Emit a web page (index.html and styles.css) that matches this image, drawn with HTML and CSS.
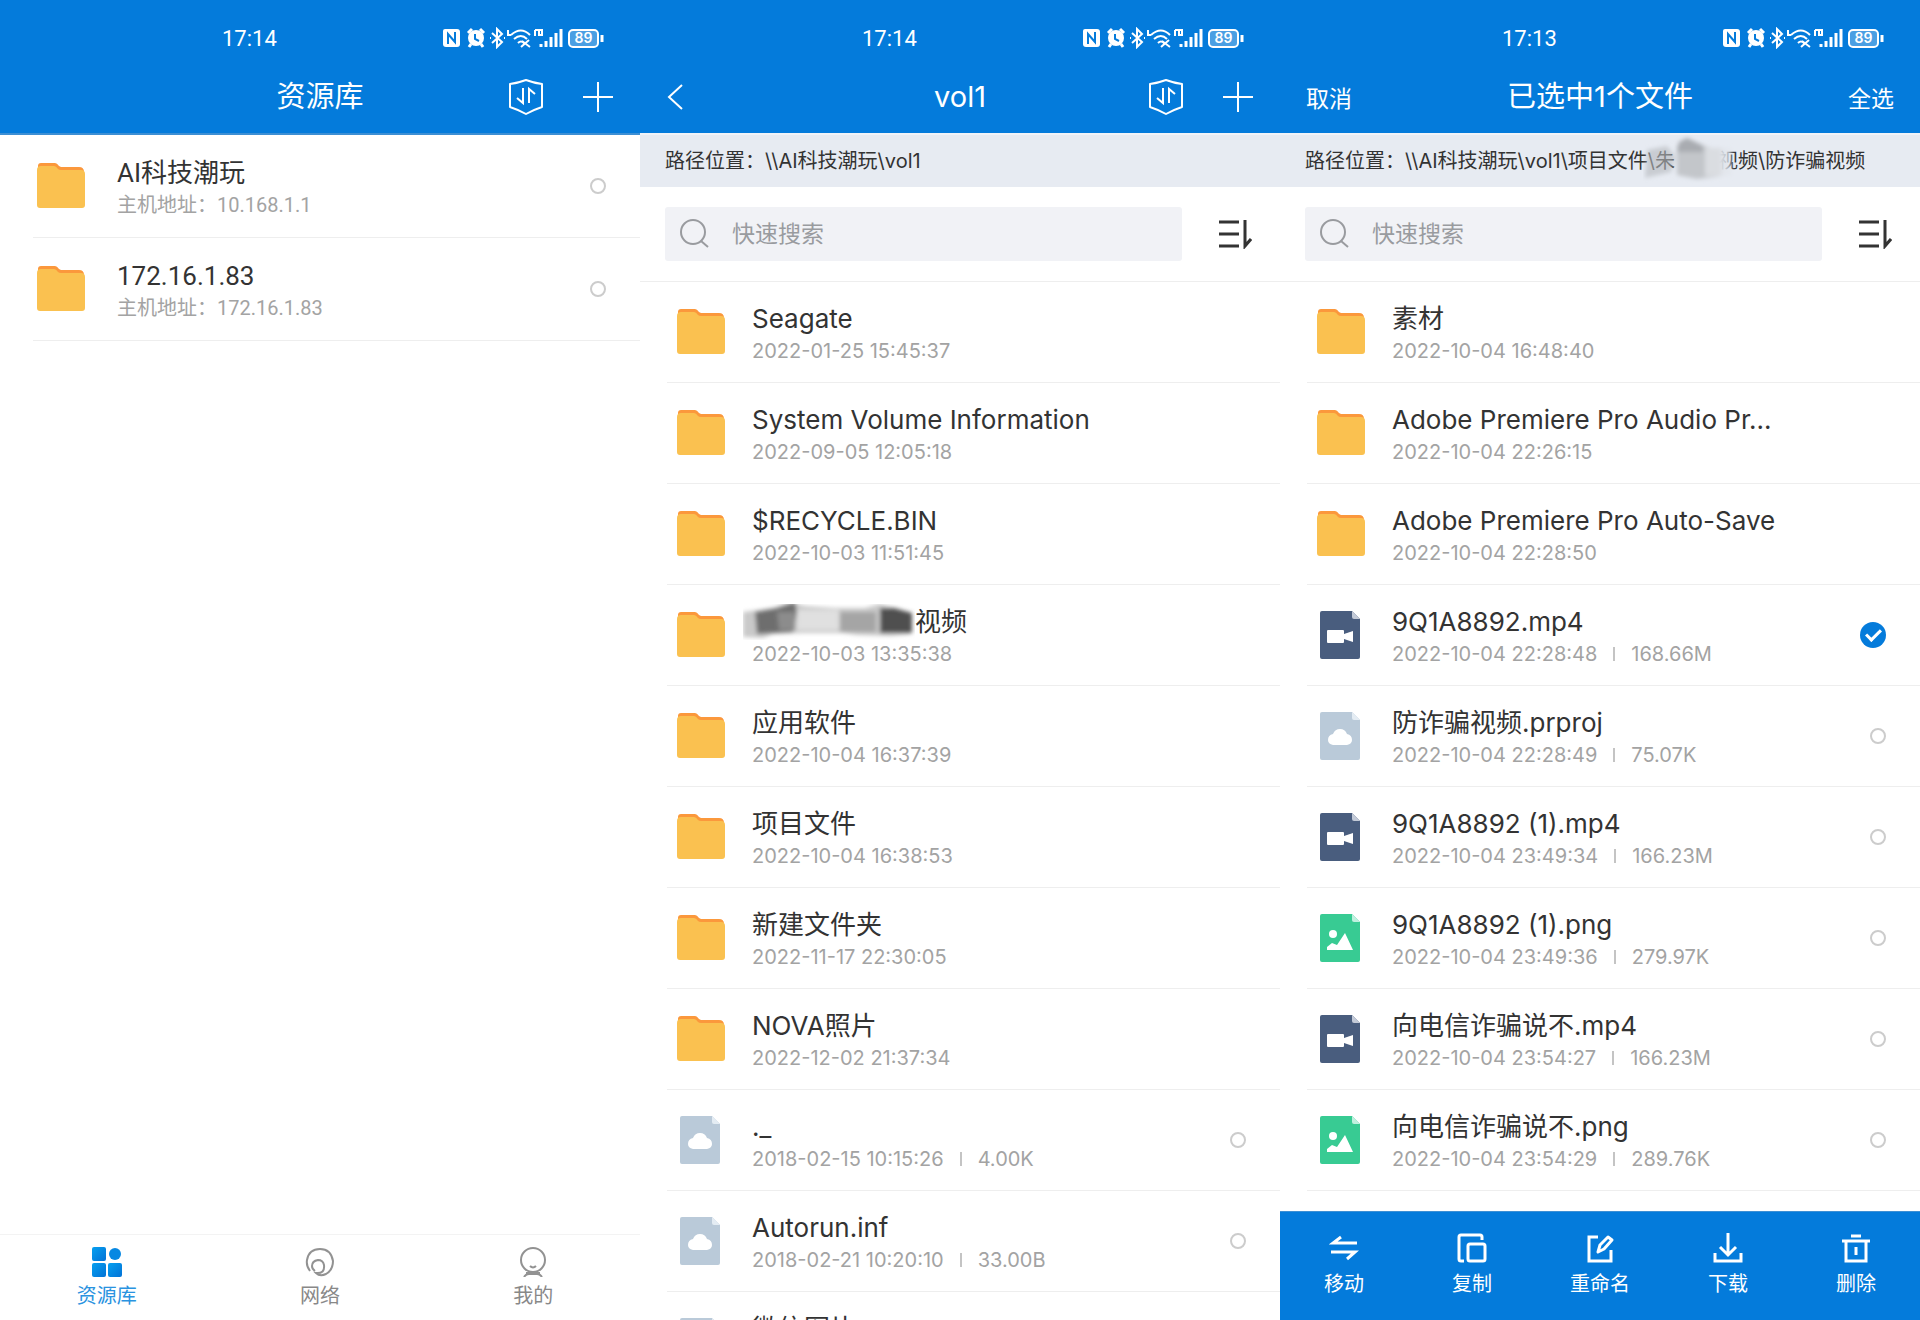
FILE: index.html
```html
<!DOCTYPE html>
<html lang="zh-CN">
<head>
<meta charset="utf-8">
<title>资源库</title>
<link rel="stylesheet" href="styles.css">
</head>
<body>
<svg class="sprite" aria-hidden="true">
  <defs>
    <linearGradient id="tile" x1="0" y1="0" x2="1" y2="1"><stop offset="0" stop-color="#06a0f0"/><stop offset="1" stop-color="#0272d6"/></linearGradient>
    <filter id="soft" x="-10%" y="-20%" width="120%" height="140%"><feGaussianBlur stdDeviation="2"/></filter>
  </defs>
  <symbol id="status" viewBox="0 0 162 22">
    <path d="M3 2h12q3 0 3 3v12q0 3-3 3H4q-3 0-3-3V4q0-2 2-2z" fill="#fff"/>
    <path d="M6 17V7l7 8V5" fill="none" stroke="#047bdb" stroke-width="2"/>
    <circle cx="34" cy="11" r="8" fill="#fff"/>
    <path d="M26 6l4-4M42 6l-4-4M29 17l-2 3M39 17l2 3" stroke="#fff" stroke-width="3"/>
    <path d="M33 7v5l4 2" fill="none" stroke="#047bdb" stroke-width="2"/>
    <path d="M50 6l10 9-5 5V2l5 5-10 9M48 11h1M62 11h1" fill="none" stroke="#fff" stroke-width="2"/>
    <path d="M69 8q10-9 19 0M72 12q7-6 13 0M76 16q3-3 6 0M66 3v5h3M80 14l8 6M87 13l-8 7" fill="none" stroke="#fff" stroke-width="2"/>
    <path d="M93 3v6M93 3h3M97 8V3h3v5z" fill="none" stroke="#fff" stroke-width="2"/>
    <path d="M99 20v-3M104 20v-6M109 20V10M114 20V6M119 20V2" stroke="#fff" stroke-width="3"/>
    <rect x="127" y="3" width="29" height="17" rx="4" fill="#4a9fe3" stroke="#fff" stroke-width="2"/>
    <path d="M160 8v7" stroke="#fff" stroke-width="3"/>
  </symbol>
  <symbol id="shield" viewBox="0 0 36 36">
    <path d="M2 5q8-1 16-4 8 3 16 4v23q-9 3-16 7-7-4-16-7z" fill="none" stroke="#fff" stroke-width="2" stroke-linejoin="round"/>
    <path d="M15 9v15l-6-5M21 24V10l6 5" fill="none" stroke="#fff" stroke-width="2"/>
  </symbol>
  <symbol id="plus" viewBox="0 0 32 32"><path d="M16 1v30M1 16h30" stroke="#fff" stroke-width="2"/></symbol>
  <symbol id="back" viewBox="0 0 18 28"><path d="M16 2L3 14l13 12" fill="none" stroke="#fff" stroke-width="2"/></symbol>
  <symbol id="search" viewBox="0 0 30 30"><circle cx="13" cy="13" r="12" fill="none" stroke="#999b9f" stroke-width="2"/><path d="M21 22l7 6" stroke="#999b9f" stroke-width="2"/></symbol>
  <symbol id="sort" viewBox="0 0 34 30"><path d="M1 3h20M1 15h20M1 27h20" stroke="#333" stroke-width="3"/><path d="M27 1v26l6-7" fill="none" stroke="#333" stroke-width="3"/></symbol>
  <symbol id="folder" viewBox="0 0 48 46">
    <path d="M1 8V4q0-3 3-3h14q2 0 4 3l2 1h18q5 0 5 5z" fill="#fb983c"/>
    <path d="M0 8q0-4 4-4h13q2 0 4 3 1 1 3 1h20q4 0 4 4v31q0 3-3 3H3q-3 0-3-3z" fill="#fac150"/>
  </symbol>
  <symbol id="video" viewBox="0 0 40 48">
    <path d="M2 0h30l8 8v38q0 2-2 2H2q-2 0-2-2V2q0-2 2-2z" fill="#495d7e"/><path d="M32 0l8 8h-6q-2 0-2-2z" fill="#c3cad7"/>
    <path d="M8 19h15q1 0 1 1v3l9-3v11l-9-3v3q0 1-1 1H8q-1 0-1-1V20q0-1 1-1z" fill="#fff"/>
  </symbol>
  <symbol id="cloud" viewBox="0 0 40 48">
    <path d="M2 0h30l8 8v38q0 2-2 2H2q-2 0-2-2V2q0-2 2-2z" fill="#bacad9"/><path d="M32 0l8 8h-6q-2 0-2-2z" fill="#e4ecf3"/>
    <path d="M13 33q-5-1-5-5 0-5 5-6 2-5 7-5t7 5q5 1 5 6 0 4-5 5z" fill="#fff"/>
  </symbol>
  <symbol id="image" viewBox="0 0 40 48">
    <path d="M2 0h30l8 8v38q0 2-2 2H2q-2 0-2-2V2q0-2 2-2z" fill="#38cb93"/><path d="M32 0l8 8h-6q-2 0-2-2z" fill="#c0f0df"/>
    <circle cx="13" cy="20" r="4" fill="#fff"/><path d="M7 36v-3l5-4 5 2 8-12 8 17z" fill="#fff"/>
  </symbol>
  <symbol id="library" viewBox="0 0 30 30"><rect width="14" height="14" rx="2" fill="url(#tile)"/><circle cx="23" cy="7" r="6" fill="#0788e2"/><rect y="16" width="14" height="14" rx="2" fill="url(#tile)"/><rect x="16" y="16" width="14" height="14" rx="2" fill="url(#tile)"/></symbol>
  <symbol id="network" viewBox="0 0 30 30"><path d="M5 24q-4-5-3-11Q4 2 15 2t13 12q0 9-7 13-6 3-10-1 9 1 8-8-1-5-6-5-6 1-6 6 0 3 3 5" fill="none" stroke="#929292" stroke-width="2"/></symbol>
  <symbol id="me" viewBox="0 0 30 30"><ellipse cx="15" cy="13" rx="12" ry="12" fill="none" stroke="#929292" stroke-width="2"/><path d="M12 19q3 3 6 0M6 30q2-3 5-3h8q3 0 5 3M8 26h14" fill="none" stroke="#929292" stroke-width="2"/></symbol>
  <symbol id="move" viewBox="0 0 30 30"><path d="M28 10H4l8-6M2 19h24l-8 7" fill="none" stroke="#fff" stroke-width="3"/></symbol>
  <symbol id="copy" viewBox="0 0 30 30"><path d="M7 28H4q-2 0-2-2V4q0-2 2-2h19q2 0 2 2v3" fill="none" stroke="#fff" stroke-width="3"/><rect x="11" y="11" width="17" height="17" rx="2" fill="none" stroke="#fff" stroke-width="3"/></symbol>
  <symbol id="rename" viewBox="0 0 30 30"><path d="M13 4H4v24h22V17" fill="none" stroke="#fff" stroke-width="3"/><path d="M13 19l2-7 8-8 4 3-8 9z" fill="none" stroke="#fff" stroke-width="3" stroke-linejoin="round"/></symbol>
  <symbol id="download" viewBox="0 0 30 30"><path d="M15 0v21M7 14l8 8 8-8M2 20v8h26v-8" fill="none" stroke="#fff" stroke-width="3"/></symbol>
  <symbol id="delete" viewBox="0 0 30 30"><path d="M1 8h28M10 3h10M5 8v20h20V8M15 14v8" fill="none" stroke="#fff" stroke-width="3"/></symbol>
</svg>

<div class="screens">
  <section class="screen">
    <header class="header header-edge">
      <div class="status"><time class="clock">17:14</time><div class="indicators"><svg class="status-icons"><use href="#status"/></svg><span class="battery-level">89</span></div></div>
      <div class="titlebar">
        <span></span><h1 class="title">资源库</h1>
        <div class="actions"><button class="icon-btn" aria-label="传输"><svg class="i-shield"><use href="#shield"/></svg></button><button class="icon-btn" aria-label="添加"><svg class="i-plus"><use href="#plus"/></svg></button></div>
      </div>
    </header>
    <ul class="list hosts">
      <li class="row"><svg class="folder"><use href="#folder"/></svg><div class="info"><span class="name">AI科技潮玩</span><span class="meta">主机地址：10.168.1.1</span></div><input type="checkbox" class="pick" aria-label="AI科技潮玩"></li>
      <li class="row"><svg class="folder"><use href="#folder"/></svg><div class="info"><span class="name">172.16.1.83</span><span class="meta">主机地址：172.16.1.83</span></div><input type="checkbox" class="pick" aria-label="172.16.1.83"></li>
    </ul>
    <nav class="tabs">
      <a href="#library" class="tab active"><svg class="i-tab"><use href="#library"/></svg>资源库</a>
      <a href="#network" class="tab"><svg class="i-tab"><use href="#network"/></svg>网络</a>
      <a href="#me" class="tab"><svg class="i-tab"><use href="#me"/></svg>我的</a>
    </nav>
  </section>

  <section class="screen">
    <header class="header">
      <div class="status"><time class="clock">17:14</time><div class="indicators"><svg class="status-icons"><use href="#status"/></svg><span class="battery-level">89</span></div></div>
      <div class="titlebar">
        <button class="icon-btn" aria-label="返回"><svg class="i-back"><use href="#back"/></svg></button><h1 class="title">vol1</h1>
        <div class="actions"><button class="icon-btn" aria-label="传输"><svg class="i-shield"><use href="#shield"/></svg></button><button class="icon-btn" aria-label="添加"><svg class="i-plus"><use href="#plus"/></svg></button></div>
      </div>
    </header>
    <div class="path">路径位置：\\AI科技潮玩\vol1</div>
    <div class="tools">
      <label class="search"><svg class="i-search"><use href="#search"/></svg><input type="text" class="query" placeholder="快速搜索" aria-label="快速搜索"></label>
      <button class="icon-btn" aria-label="排序"><svg class="i-sort"><use href="#sort"/></svg></button>
    </div>
    <ul class="list">
      <li class="row"><svg class="folder"><use href="#folder"/></svg><div class="info"><span class="name">Seagate</span><span class="meta">2022-01-25 15:45:37</span></div></li>
      <li class="row"><svg class="folder"><use href="#folder"/></svg><div class="info"><span class="name">System Volume Information</span><span class="meta">2022-09-05 12:05:18</span></div></li>
      <li class="row"><svg class="folder"><use href="#folder"/></svg><div class="info"><span class="name">$RECYCLE.BIN</span><span class="meta">2022-10-03 11:51:45</span></div></li>
      <li class="row"><svg class="folder"><use href="#folder"/></svg><div class="info"><span class="name name-masked"><svg class="smudge" viewBox="0 0 172 36"><g filter="url(#soft)"><path d="M0 8l30-4 18-6 14 4 30 2 30 0 14-4 24 6 8 10v14l-20 2-34-1-14-2H60l-30 1-10 4-20-1z" fill="#c9c9c9"/><path d="M12 8l22-4 18-6 2 10-4 20-36 2z" fill="#6e6e6e"/><path d="M34 8h18v18H36z" fill="#8c8c8c"/><path d="M54 6h42v20H54z" fill="#e0e0e0"/><path d="M97 8h36v20H97z" fill="#a5a5a5"/><path d="M137 4l14 0 18 5v20h-32z" fill="#505050"/></g></svg>视频</span><span class="meta">2022-10-03 13:35:38</span></div></li>
      <li class="row"><svg class="folder"><use href="#folder"/></svg><div class="info"><span class="name">应用软件</span><span class="meta">2022-10-04 16:37:39</span></div></li>
      <li class="row"><svg class="folder"><use href="#folder"/></svg><div class="info"><span class="name">项目文件</span><span class="meta">2022-10-04 16:38:53</span></div></li>
      <li class="row"><svg class="folder"><use href="#folder"/></svg><div class="info"><span class="name">新建文件夹</span><span class="meta">2022-11-17 22:30:05</span></div></li>
      <li class="row"><svg class="folder"><use href="#folder"/></svg><div class="info"><span class="name">NOVA照片</span><span class="meta">2022-12-02 21:37:34</span></div></li>
      <li class="row"><svg class="file"><use href="#cloud"/></svg><div class="info"><span class="name">._</span><span class="meta">2018-02-15 10:15:26<i class="bar"></i>4.00K</span></div><input type="checkbox" class="pick" aria-label="._"></li>
      <li class="row"><svg class="file"><use href="#cloud"/></svg><div class="info"><span class="name">Autorun.inf</span><span class="meta">2018-02-21 10:20:10<i class="bar"></i>33.00B</span></div><input type="checkbox" class="pick" aria-label="Autorun.inf"></li>
      <li class="row"><svg class="file"><use href="#cloud"/></svg><div class="info"><span class="name">微信图片</span><span class="meta">2018-02-21 10:20:10</span></div></li>
    </ul>
  </section>

  <section class="screen">
    <header class="header">
      <div class="status"><time class="clock">17:13</time><div class="indicators"><svg class="status-icons"><use href="#status"/></svg><span class="battery-level">89</span></div></div>
      <div class="titlebar">
        <button class="text-btn">取消</button><h1 class="title">已选中1个文件</h1><div class="actions"><button class="text-btn">全选</button></div>
      </div>
    </header>
    <div class="path">路径位置：\\AI科技潮玩\vol1\项目文件\朱<span class="gap"><svg class="path-smudge" viewBox="0 0 92 50"><g filter="url(#soft)"><path d="M4 16l20-4 8 10-4 16-26 6z" fill="#b4b8bd" fill-opacity=".6"/><path d="M34 12l10-8 20 9 14 3v26l-24 3-20-4z" fill="#c3c6ca"/><path d="M36 8l8-4 16 8v6H34z" fill="#a9acb1"/><path d="M62 14h18v28H62z" fill="#dadde1"/><path d="M78 14h10v28H78z" fill="#e2e6ec" fill-opacity=".8"/></g></svg></span>视频\防诈骗视频</div>
    <div class="tools">
      <label class="search"><svg class="i-search"><use href="#search"/></svg><input type="text" class="query" placeholder="快速搜索" aria-label="快速搜索"></label>
      <button class="icon-btn" aria-label="排序"><svg class="i-sort"><use href="#sort"/></svg></button>
    </div>
    <ul class="list">
      <li class="row"><svg class="folder"><use href="#folder"/></svg><div class="info"><span class="name">素材</span><span class="meta">2022-10-04 16:48:40</span></div></li>
      <li class="row"><svg class="folder"><use href="#folder"/></svg><div class="info"><span class="name">Adobe Premiere Pro Audio Pr...</span><span class="meta">2022-10-04 22:26:15</span></div></li>
      <li class="row"><svg class="folder"><use href="#folder"/></svg><div class="info"><span class="name">Adobe Premiere Pro Auto-Save</span><span class="meta">2022-10-04 22:28:50</span></div></li>
      <li class="row"><svg class="file"><use href="#video"/></svg><div class="info"><span class="name">9Q1A8892.mp4</span><span class="meta">2022-10-04 22:28:48<i class="bar"></i>168.66M</span></div><input type="checkbox" class="pick" aria-label="9Q1A8892.mp4" checked></li>
      <li class="row"><svg class="file"><use href="#cloud"/></svg><div class="info"><span class="name">防诈骗视频.prproj</span><span class="meta">2022-10-04 22:28:49<i class="bar"></i>75.07K</span></div><input type="checkbox" class="pick" aria-label="防诈骗视频.prproj"></li>
      <li class="row"><svg class="file"><use href="#video"/></svg><div class="info"><span class="name">9Q1A8892 (1).mp4</span><span class="meta">2022-10-04 23:49:34<i class="bar"></i>166.23M</span></div><input type="checkbox" class="pick" aria-label="9Q1A8892 (1).mp4"></li>
      <li class="row"><svg class="file"><use href="#image"/></svg><div class="info"><span class="name">9Q1A8892 (1).png</span><span class="meta">2022-10-04 23:49:36<i class="bar"></i>279.97K</span></div><input type="checkbox" class="pick" aria-label="9Q1A8892 (1).png"></li>
      <li class="row"><svg class="file"><use href="#video"/></svg><div class="info"><span class="name">向电信诈骗说不.mp4</span><span class="meta">2022-10-04 23:54:27<i class="bar"></i>166.23M</span></div><input type="checkbox" class="pick" aria-label="向电信诈骗说不.mp4"></li>
      <li class="row"><svg class="file"><use href="#image"/></svg><div class="info"><span class="name">向电信诈骗说不.png</span><span class="meta">2022-10-04 23:54:29<i class="bar"></i>289.76K</span></div><input type="checkbox" class="pick" aria-label="向电信诈骗说不.png"></li>
    </ul>
    <div class="toolbar">
      <button class="tool"><svg class="i-tool"><use href="#move"/></svg>移动</button>
      <button class="tool"><svg class="i-tool"><use href="#copy"/></svg>复制</button>
      <button class="tool"><svg class="i-tool"><use href="#rename"/></svg>重命名</button>
      <button class="tool"><svg class="i-tool"><use href="#download"/></svg>下载</button>
      <button class="tool"><svg class="i-tool"><use href="#delete"/></svg>删除</button>
    </div>
  </section>
</div>
</body>
</html>
```
FILE: styles.css
```css
* { box-sizing: border-box; }
body { margin: 0; background: #fff; color: #333; font-family: Inter, "Noto Sans CJK SC", sans-serif; font-size: 20px; }
button { padding: 0; border: 0; background: none; color: inherit; font: inherit; }
svg { display: block; flex: none; }
.sprite { position: absolute; width: 0; height: 0; }
.screens { display: grid; grid-template-columns: repeat(3, minmax(0, 1fr)); }
.screen { display: flex; flex-direction: column; height: 100vh; overflow: hidden; }

.header { flex: none; padding: 8px 26px 7px; background: #047bdb; color: #fff; }
.header-edge { border-bottom: 2px solid #3d8fd4; }
.status { display: flex; align-items: center; justify-content: flex-end; height: 60px; }
.clock { width: 56px; margin-right: 164px; font-family: Roboto, sans-serif; font-size: 22px; white-space: nowrap; }
.indicators { position: relative; margin-right: 10px; }
.status-icons { width: 162px; height: 22px; }
.battery-level { position: absolute; left: 127px; top: 2px; width: 29px; font-size: 14px; line-height: 18px; font-weight: 600; text-align: center; }
.titlebar { display: grid; grid-template-columns: 1fr auto 1fr; align-items: center; height: 58px; }
.title { margin: 0; font-size: 29px; line-height: 40px; font-weight: 400; }
.actions { display: flex; justify-content: flex-end; align-items: center; gap: 38px; }
.icon-btn { display: block; justify-self: start; }
.text-btn { justify-self: start; font-size: 23px; }
.i-shield { width: 36px; height: 36px; }
.i-plus { width: 32px; height: 32px; }
.i-back { width: 18px; height: 28px; }

.path { flex: none; height: 54px; padding: 0 25px; border-top: 2px solid #f0f3f8; background: #e7ebf2; line-height: 52px; white-space: nowrap; }
.gap { display: inline-block; position: relative; width: 43px; height: 20px; }
.path-smudge { position: absolute; left: -32px; top: -14px; width: 92px; height: 50px; }
.tools { flex: none; display: flex; align-items: center; gap: 36px; padding: 20px 28px 20px 25px; border-bottom: 1px solid #eee; }
.search { flex: 1; display: flex; align-items: center; gap: 22px; height: 54px; padding: 0 15px; border-radius: 3px; background: #f1f2f6; }
.query { flex: 1; min-width: 0; border: 0; padding: 0; background: none; outline: 0; color: #333; font: inherit; font-size: 23px; }
.query::placeholder { color: #999b9f; opacity: 1; }
.i-search { width: 30px; height: 30px; }
.i-sort { width: 34px; height: 30px; }

.list { flex: 1; min-height: 0; overflow: hidden; margin: 0; padding: 0 0 0 27px; list-style: none; }
.row { display: flex; align-items: center; height: 101px; padding: 0 34px 0 10px; border-bottom: 1px solid #eee; }
.hosts { padding-left: 33px; font-family: Roboto, "Noto Sans CJK SC", sans-serif; }
.hosts .row { height: 103px; padding-left: 4px; }
.folder { width: 48px; height: 46px; margin: 0 27px 2px 0; }
.hosts .folder { margin-right: 32px; }
.file { width: 40px; height: 48px; margin: 0 32px 0 3px; }
.info { flex: 1; min-width: 0; display: flex; flex-direction: column; gap: 4px; padding-top: 2px; }
.name { font-size: 26px; line-height: 32px; white-space: nowrap; }
.name-masked { display: flex; }
.smudge { width: 172px; height: 36px; margin: -2px 0 -2px -9px; }
.meta { display: flex; align-items: center; line-height: 24px; color: #a3a3a3; white-space: nowrap; }
.bar { width: 2px; height: 14px; margin: 0 16px; background: #c4c4c4; }
.pick { appearance: none; flex: none; width: 16px; height: 16px; margin: 0; border: 2px solid #ccc; border-radius: 50%; }
.pick:checked { width: 26px; height: 26px; border: 0; background: #047bdb; display: grid; place-items: center; }
.pick:checked::after { content: ""; width: 12px; height: 6px; margin-bottom: 4px; border: solid #fff; border-width: 0 0 3px 3px; transform: rotate(-45deg); }

.tabs { flex: none; display: grid; grid-template-columns: repeat(3, 1fr); height: 86px; padding-top: 12px; border-top: 1px solid #f3f3f3; }
.tab { display: flex; flex-direction: column; align-items: center; gap: 4px; color: #888; line-height: 30px; text-decoration: none; }
.tab.active { color: #2a93e0; }
.i-tab { width: 30px; height: 30px; }
.toolbar { flex: none; display: grid; grid-template-columns: repeat(5, 1fr); height: 109px; padding-top: 21px; border-top: 1px solid #3d8fd4; background: #047bdb; color: #fff; }
.tool { display: flex; flex-direction: column; align-items: center; gap: 6px; line-height: 30px; }
.i-tool { width: 30px; height: 30px; }
```
